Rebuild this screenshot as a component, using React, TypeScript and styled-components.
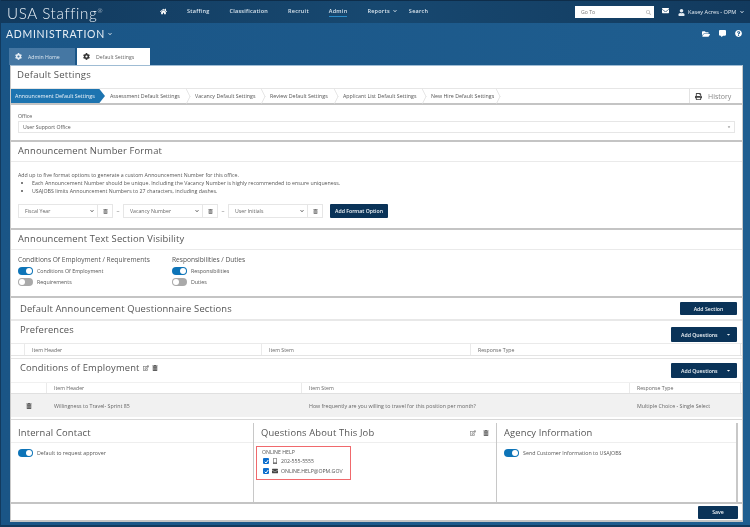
import React from "react";
import styled, { createGlobalStyle } from "styled-components";
import {
  FaHome,
  FaCog,
  FaEnvelope,
  FaUser,
  FaTrashAlt,
  FaRegEdit,
  FaMobileAlt,
  FaCommentAlt,
  FaQuestionCircle,
  FaFolderOpen,
  FaPrint,
  FaCaretDown,
  FaChevronDown,
  FaSearch,
} from "react-icons/fa";

const Global = createGlobalStyle`
  html, body { margin: 0; padding: 0; }
  body {
    width: 750px;
    height: 527px;
    overflow: hidden;
    font-family: "Open Sans", "Noto Sans", sans-serif;
    color: #555;
    background: #1f5e90;
  }
  * { box-sizing: border-box; }
`;

const steps = [
  { label: "Assessment Default Settings", width: 85 },
  { label: "Vacancy Default Settings", width: 75 },
  { label: "Review Default Settings", width: 73 },
  { label: "Applicant List Default Settings", width: 88 },
  { label: "New Hire Default Settings", width: 74 },
];

export default function App() {
  return (
    <Page>
      <Global />
      <TopBar>
        <Logo>
          USA Staffing<sup>®</sup>
        </Logo>
        <Nav>
          <HomeLink>
            <FaHome size={7} />
          </HomeLink>
          <NavLink>Staffing</NavLink>
          <NavLink>Classification</NavLink>
          <NavLink>Recruit</NavLink>
          <NavLink $active>Admin</NavLink>
          <NavLink $tight>
            Reports <FaChevronDown size={4} />
          </NavLink>
          <NavLink>Search</NavLink>
        </Nav>
        <GoTo>
          Go To
          <FaSearch size={5} color="#bbb" />
        </GoTo>
        <TopIcon>
          <FaEnvelope size={7} />
        </TopIcon>
        <UserBox>
          <FaUser size={7} />
          <span>Kasey Acres - OPM</span>
          <FaChevronDown size={4} />
        </UserBox>
      </TopBar>
      <SubBar>
        <SubTitle>
          ADMINISTRATION <FaChevronDown size={4} />
        </SubTitle>
        <SubIcons>
          <FaFolderOpen size={8} />
          <FaCommentAlt size={7} />
          <FaQuestionCircle size={7} />
        </SubIcons>
      </SubBar>
      <Tabs>
        <Tab>
          <FaCog size={7} color="#e6eef5" />
          Admin Home
        </Tab>
        <Tab $active>
          <FaCog size={7} color="#333" />
          Default Settings
        </Tab>
      </Tabs>
      <Content>
        <PageTitle>Default Settings</PageTitle>
        <StepRow>
          <ActiveStep>Announcement Default Settings</ActiveStep>
          {steps.map((s) => (
            <Step key={s.label} style={{ width: s.width }}>
              {s.label}
            </Step>
          ))}
          <History>
            <FaPrint size={7} color="#444" />
            History
          </History>
        </StepRow>

        <OfficeSection>
          <FieldLabel>Office</FieldLabel>
          <OfficeSelect>
            User Support Office
            <FaCaretDown size={4} color="#777" />
          </OfficeSelect>
        </OfficeSection>

        <FormatSection>
          <SectionTitle>Announcement Number Format</SectionTitle>
          <FormatBody>
            <Para>Add up to five format options to generate a custom Announcement Number for this office.</Para>
            <Bullets>
              <li>Each Announcement Number should be unique. Including the Vacancy Number is highly recommended to ensure uniqueness.</li>
              <li>USAJOBS limits Announcement Numbers to 27 characters, including dashes.</li>
            </Bullets>
            <FormatRow>
              <FormatSelect>
                Fiscal Year
                <FaChevronDown size={4} color="#555" />
              </FormatSelect>
              <TrashBox>
                <FaTrashAlt size={5} />
              </TrashBox>
              <Dash>–</Dash>
              <FormatSelect>
                Vacancy Number
                <FaChevronDown size={4} color="#555" />
              </FormatSelect>
              <TrashBox>
                <FaTrashAlt size={5} />
              </TrashBox>
              <Dash>–</Dash>
              <FormatSelect>
                User Initials
                <FaChevronDown size={4} color="#555" />
              </FormatSelect>
              <TrashBox>
                <FaTrashAlt size={5} />
              </TrashBox>
              <DarkButton $w={58} $h={14} $ml={7}>
                Add Format Option
              </DarkButton>
            </FormatRow>
          </FormatBody>
        </FormatSection>

        <VisibilitySection>
          <SectionTitle>Announcement Text Section Visibility</SectionTitle>
          <VisibilityBody>
            <VisColumn $w={154}>
              <VisHeading>Conditions Of Employment / Requirements</VisHeading>
              <ToggleRow>
                <Toggle $on />
                Conditions Of Employment
              </ToggleRow>
              <ToggleRow>
                <Toggle />
                Requirements
              </ToggleRow>
            </VisColumn>
            <VisColumn $w={120}>
              <VisHeading>Responsibilities / Duties</VisHeading>
              <ToggleRow>
                <Toggle $on />
                Responsibilities
              </ToggleRow>
              <ToggleRow>
                <Toggle />
                Duties
              </ToggleRow>
            </VisColumn>
          </VisibilityBody>
        </VisibilitySection>

        <QuestionnaireHead>
          <QTitle>Default Announcement Questionnaire Sections</QTitle>
          <DarkButton $w={57} $h={13} $mr={5}>
            Add Section
          </DarkButton>
        </QuestionnaireHead>

        <PrefHead>
          <QTitle>Preferences</QTitle>
          <SplitButton top={6} />
        </PrefHead>
        <PrefTable>
          <HeadCell $w={14} />
          <HeadCell $w={237}>Item Header</HeadCell>
          <HeadCell $w={209}>Item Stem</HeadCell>
          <HeadCell $w={270}>Response Type</HeadCell>
        </PrefTable>

        <CondHead>
          <QTitle>
            Conditions of Employment
            <FaRegEdit size={6} />
            <FaTrashAlt size={6} />
          </QTitle>
          <SplitButton top={4} />
        </CondHead>
        <CondTable>
          <HeadCell $w={36} />
          <HeadCell $w={255}>Item Header</HeadCell>
          <HeadCell $w={328}>Item Stem</HeadCell>
          <HeadCell $w={111}>Response Type</HeadCell>
        </CondTable>
        <CondRow>
          <BodyCell $w={36} $center>
            <FaTrashAlt size={6} color="#555" />
          </BodyCell>
          <BodyCell $w={255}>Willingness to Travel- Sprint 85</BodyCell>
          <BodyCell $w={328}>How frequently are you willing to travel for this position per month?</BodyCell>
          <BodyCell $w={111}>Multiple Choice - Single Select</BodyCell>
        </CondRow>

        <Cards>
          <Card>
            <CardTitle>Internal Contact</CardTitle>
            <CardBody>
              <ToggleRow>
                <Toggle $on />
                Default to request approver
              </ToggleRow>
            </CardBody>
          </Card>
          <Card>
            <CardTitle>
              Questions About This Job
              <CardTools>
                <FaRegEdit size={6} />
                <FaTrashAlt size={6} />
              </CardTools>
            </CardTitle>
            <HelpBox>
              <div>ONLINE HELP</div>
              <HelpLine>
                <Check />
                <FaMobileAlt size={6} color="#555" />
                202-555-5555
              </HelpLine>
              <HelpLine>
                <Check />
                <FaEnvelope size={6} color="#444" />
                ONLINE.HELP@OPM.GOV
              </HelpLine>
            </HelpBox>
          </Card>
          <Card $last>
            <CardTitle>Agency Information</CardTitle>
            <CardBody>
              <ToggleRow>
                <Toggle $on />
                Send Customer Information to USAJOBS
              </ToggleRow>
            </CardBody>
          </Card>
        </Cards>

        <Footer>
          <DarkButton $w={40} $h={13}>
            Save
          </DarkButton>
        </Footer>
      </Content>
    </Page>
  );
}

function SplitButton({ top }: { top: number }) {
  return (
    <SplitWrap $top={top}>
      Add Questions
      <FaCaretDown size={5} />
    </SplitWrap>
  );
}

function Check() {
  return (
    <CheckBox>
      <svg width="5" height="5" viewBox="0 0 10 10">
        <path d="M1.5 5.5 L4 8 L8.5 2" fill="none" stroke="#fff" strokeWidth="2" />
      </svg>
    </CheckBox>
  );
}

const Page = styled.div`
  width: 750px;
  height: 527px;
  display: flex;
  flex-direction: column;
  border-left: 1px solid #123a5e;
  border-bottom: 2px solid #123a5e;
  background: linear-gradient(90deg, #1a5586 0%, #1f5e90 100%);
  overflow: hidden;
  filter: blur(0.25px);
`;

const TopBar = styled.header`
  height: 23px;
  flex: none;
  display: flex;
  align-items: center;
  padding: 0 0 0 6px;
  color: #fff;
  background: linear-gradient(90deg, #123a5e, #174870 50%, #123a5e);
  border-top: 1px solid #0e2d4a;
`;

const Logo = styled.div`
  width: 153px;
  flex: none;
  margin-top: 1px;
  font-family: "Lato", sans-serif;
  font-size: 15.2px;
  font-weight: 300;
  letter-spacing: 0.65px;
  color: #eaf1f7;
  sup {
    font-size: 6px;
    vertical-align: 6px;
    line-height: 0;
  }
`;

const Nav = styled.nav`
  display: flex;
  align-items: center;
  flex: none;
  width: 415px;
  margin-top: -2px;
`;

const HomeLink = styled.span`
  display: flex;
  width: 27px;
`;

const NavLink = styled.span<{ $active?: boolean; $tight?: boolean }>`
  display: inline-flex;
  align-items: center;
  gap: 3px;
  margin-right: ${(p) => (p.$tight ? 12 : 20)}px;
  font-size: 5.5px;
  font-weight: 600;
  letter-spacing: 0.25px;
  color: #dbe6ef;
  padding: 2px 0 1px;
  border-bottom: 1px solid ${(p) => (p.$active ? "#2a8cc9" : "transparent")};
`;

const GoTo = styled.div`
  width: 79px;
  height: 12px;
  flex: none;
  display: flex;
  align-items: center;
  justify-content: space-between;
  padding: 0 3px 0 6px;
  background: #fff;
  color: #777;
  font-size: 5.2px;
`;

const TopIcon = styled.span`
  display: flex;
  flex: none;
  margin-left: 8px;
  margin-top: -3px;
`;

const UserBox = styled.div`
  display: flex;
  flex: none;
  align-items: center;
  gap: 3px;
  margin-left: 9px;
  font-size: 5.6px;
  color: #e4ecf3;
  white-space: nowrap;
  span {
    margin-right: 1px;
  }
`;

const SubBar = styled.div`
  height: 25px;
  flex: none;
  display: flex;
  align-items: center;
  justify-content: space-between;
  padding: 0 8px 4px 5px;
  color: #fff;
`;

const SubTitle = styled.div`
  display: flex;
  align-items: center;
  gap: 3px;
  font-family: "Lato", sans-serif;
  font-size: 10.5px;
  font-weight: 400;
  letter-spacing: 0.7px;
  color: #e6eef5;
`;

const SubIcons = styled.div`
  display: flex;
  align-items: center;
  gap: 9px;
`;

const Tabs = styled.div`
  height: 17px;
  flex: none;
  display: flex;
  align-items: stretch;
  padding-left: 8px;
  gap: 2px;
`;

const Tab = styled.div<{ $active?: boolean }>`
  width: ${(p) => (p.$active ? 73 : 66)}px;
  display: flex;
  align-items: center;
  gap: 6px;
  padding-left: 6px;
  font-size: 5.2px;
  color: ${(p) => (p.$active ? "#666" : "#dce6ef")};
  background: ${(p) => (p.$active ? "#fff" : "#4577a3")};
`;

const Content = styled.main`
  width: 733px;
  margin-left: 9px;
  height: 457px;
  flex: none;
  display: flex;
  flex-direction: column;
  background: #fff;
  border-top: 1px solid #9fbcd4;
  border-left: 1px solid #c9c9c9;
  border-right: 1px solid #c9c9c9;
  border-bottom: 2px solid #c4c4c4;
`;

const PageTitle = styled.h1`
  margin: 0;
  height: 22px;
  flex: none;
  padding: 0 6px 5px;
  display: flex;
  align-items: center;
  font-size: 9.6px;
  font-weight: 400;
  color: #555;
  letter-spacing: 0.2px;
`;

const StepRow = styled.div`
  height: 17px;
  flex: none;
  display: flex;
  align-items: center;
  border-top: 1px solid #e6e6e6;
  border-bottom: 2px solid #c4c4c4;
`;

const ActiveStep = styled.div`
  width: 94px;
  height: 100%;
  display: flex;
  align-items: center;
  padding-left: 4px;
  font-size: 5.4px;
  white-space: nowrap;
  color: #eef4f9;
  background: #1d74b0;
  clip-path: polygon(0 0, 94% 0, 100% 50%, 94% 100%, 0 100%);
`;

const Step = styled.div`
  position: relative;
  height: 100%;
  display: flex;
  align-items: center;
  padding-left: 5px;
  font-size: 5.3px;
  white-space: nowrap;
  color: #555;
  &::after {
    content: "";
    position: absolute;
    right: -2px;
    top: 2px;
    width: 10px;
    height: 10px;
    border-top: 1px solid #ddd;
    border-right: 1px solid #ddd;
    transform: scaleX(0.5) rotate(45deg);
  }
`;

const History = styled.div`
  margin-left: auto;
  width: 53px;
  height: 100%;
  display: flex;
  align-items: center;
  gap: 6px;
  padding-left: 5px;
  border-left: 1px solid #e3e3e3;
  font-size: 7px;
  color: #888;
`;

const OfficeSection = styled.section`
  height: 37px;
  flex: none;
  padding: 8px 7px 0;
  border-bottom: 2px solid #c4c4c4;
`;

const FieldLabel = styled.div`
  font-size: 5.2px;
  line-height: 7px;
  color: #555;
`;

const OfficeSelect = styled.div`
  height: 12px;
  margin-top: 1px;
  display: flex;
  align-items: center;
  justify-content: space-between;
  padding: 0 3px 0 4px;
  border: 1px solid #e6e6e6;
  font-size: 5.2px;
  color: #555;
`;

const FormatSection = styled.section`
  height: 88px;
  flex: none;
  border-bottom: 2px solid #c4c4c4;
`;

const SectionTitle = styled.h2`
  margin: 0;
  height: 20px;
  display: flex;
  align-items: center;
  padding: 0 0 2px 7px;
  font-size: 9.4px;
  font-weight: 400;
  letter-spacing: 0.15px;
  color: #555;
  border-bottom: 1px solid #eaeaea;
`;

const FormatBody = styled.div`
  padding: 9px 7px 0;
`;

const Para = styled.div`
  font-size: 5.25px;
  line-height: 8px;
  color: #555;
`;

const Bullets = styled.ul`
  margin: 0;
  padding: 0 0 0 14px;
  font-size: 5.25px;
  line-height: 8px;
  color: #555;
`;

const FormatRow = styled.div`
  display: flex;
  align-items: center;
  margin-top: 9px;
`;

const FormatSelect = styled.div`
  width: 80px;
  height: 14px;
  display: flex;
  align-items: center;
  justify-content: space-between;
  padding: 0 3px 0 6px;
  border: 1px solid #e6e6e6;
  font-size: 5.2px;
  color: #666;
`;

const TrashBox = styled.div`
  width: 15px;
  height: 14px;
  flex: none;
  display: flex;
  align-items: center;
  justify-content: center;
  border: 1px solid #e6e6e6;
  border-left: 0;
  color: #777;
`;

const Dash = styled.span`
  width: 10px;
  text-align: center;
  font-size: 6px;
  color: #666;
`;

const DarkButton = styled.button<{ $w: number; $h: number; $ml?: number; $mr?: number }>`
  width: ${(p) => p.$w}px;
  height: ${(p) => p.$h}px;
  margin-left: ${(p) => p.$ml ?? 0}px;
  margin-right: ${(p) => p.$mr ?? 0}px;
  padding: 0;
  border: 0;
  border-radius: 1px;
  background: #0a3358;
  color: #f2f6f9;
  font-family: inherit;
  font-size: 5.2px;
  font-weight: 600;
`;

const VisibilitySection = styled.section`
  height: 68px;
  flex: none;
  border-bottom: 2px solid #c4c4c4;
`;

const VisibilityBody = styled.div`
  display: flex;
  padding: 5px 7px 0;
`;

const VisColumn = styled.div<{ $w: number }>`
  width: ${(p) => p.$w}px;
`;

const VisHeading = styled.div`
  font-size: 6.6px;
  line-height: 9px;
  color: #555;
  margin-bottom: 1px;
  white-space: nowrap;
`;

const ToggleRow = styled.div`
  height: 11px;
  display: flex;
  align-items: center;
  gap: 4px;
  font-size: 5.3px;
  color: #555;
  white-space: nowrap;
`;

const Toggle = styled.span<{ $on?: boolean }>`
  position: relative;
  width: 15px;
  height: 8px;
  flex: none;
  border-radius: 4px;
  background: ${(p) => (p.$on ? "#0d74b8" : "#a9a9a9")};
  &::after {
    content: "";
    position: absolute;
    top: 1px;
    left: ${(p) => (p.$on ? 8 : 1)}px;
    width: 6px;
    height: 6px;
    border-radius: 50%;
    background: #fff;
  }
`;

const QuestionnaireHead = styled.div`
  height: 23px;
  flex: none;
  display: flex;
  align-items: center;
  justify-content: space-between;
  padding-left: 9px;
  border-bottom: 2px solid #e8e8e8;
`;

const QTitle = styled.div`
  display: flex;
  align-items: center;
  gap: 3px;
  height: 13px;
  margin: 2px 0;
  font-size: 9.4px;
  letter-spacing: 0.15px;
  color: #555;
`;

const PrefHead = styled.div`
  height: 22px;
  flex: none;
  display: flex;
  align-items: flex-start;
  justify-content: space-between;
  padding: 0 5px 0 9px;
`;

const SplitWrap = styled.div<{ $top: number }>`
  width: 66px;
  height: 15px;
  margin-top: ${(p) => p.$top}px;
  display: flex;
  align-items: center;
  justify-content: space-between;
  padding: 0 6px 0 10px;
  border-radius: 1px;
  background: #0a3358;
  color: #f2f6f9;
  font-size: 5.2px;
  font-weight: 600;
`;

const PrefTable = styled.div`
  height: 13px;
  flex: none;
  display: flex;
  border-top: 1px solid #eaeaea;
  border-bottom: 1px solid #e4e4e4;
`;

const HeadCell = styled.div<{ $w: number }>`
  width: ${(p) => p.$w}px;
  display: flex;
  align-items: center;
  padding-left: 7px;
  font-size: 5.2px;
  color: #666;
  border-right: 1px solid #eaeaea;
`;

const CondHead = styled.div`
  height: 24px;
  flex: none;
  display: flex;
  align-items: flex-start;
  justify-content: space-between;
  padding: 0 5px 0 9px;
  margin-top: 2px;
  border-top: 1px solid #e4e4e4;
`;

const CondTable = styled.div`
  height: 12px;
  flex: none;
  display: flex;
  border-top: 1px solid #f0f0f0;
  border-bottom: 1px solid #e0e0e0;
`;

const CondRow = styled.div`
  height: 23px;
  flex: none;
  display: flex;
  background: #f1f1f1;
`;

const BodyCell = styled.div<{ $w: number; $center?: boolean }>`
  width: ${(p) => p.$w}px;
  display: flex;
  align-items: center;
  justify-content: ${(p) => (p.$center ? "center" : "flex-start")};
  padding-left: ${(p) => (p.$center ? 0 : 7)}px;
  font-size: 5.3px;
  color: #666;
`;

const Cards = styled.div`
  height: 85px;
  flex: none;
  display: flex;
  margin-top: 2px;
  padding-top: 3px;
  border-top: 1px solid #d8d8d8;
  border-bottom: 2px solid #c4c4c4;
`;

const Card = styled.div<{ $last?: boolean }>`
  width: ${(p) => (p.$last ? 241 : 243)}px;
  flex: none;
  border-right: ${(p) => (p.$last ? "2px" : "1px")} solid #c8c8c8;
`;

const CardTitle = styled.div`
  height: 20px;
  display: flex;
  align-items: center;
  justify-content: space-between;
  padding: 0 7px;
  font-size: 9.4px;
  letter-spacing: 0.15px;
  color: #555;
  border-bottom: 1px solid #eee;
`;

const CardTools = styled.span`
  display: flex;
  gap: 7px;
  color: #666;
`;

const CardBody = styled.div`
  padding: 4px 7px;
`;

const HelpBox = styled.div`
  width: 95px;
  height: 34px;
  margin: 3px 0 0 2px;
  padding: 2px 5px;
  border: 1px solid #f0696c;
  font-size: 5.2px;
  line-height: 7px;
  color: #555;
`;

const HelpLine = styled.div`
  height: 10px;
  display: flex;
  align-items: center;
  gap: 3px;
  margin-left: 1px;
`;

const CheckBox = styled.span`
  width: 6px;
  height: 6px;
  flex: none;
  display: flex;
  align-items: center;
  justify-content: center;
  border-radius: 1px;
  background: #0d6ecd;
`;

const Footer = styled.div`
  flex: 1;
  display: flex;
  align-items: center;
  justify-content: flex-end;
  padding-right: 4px;
`;
